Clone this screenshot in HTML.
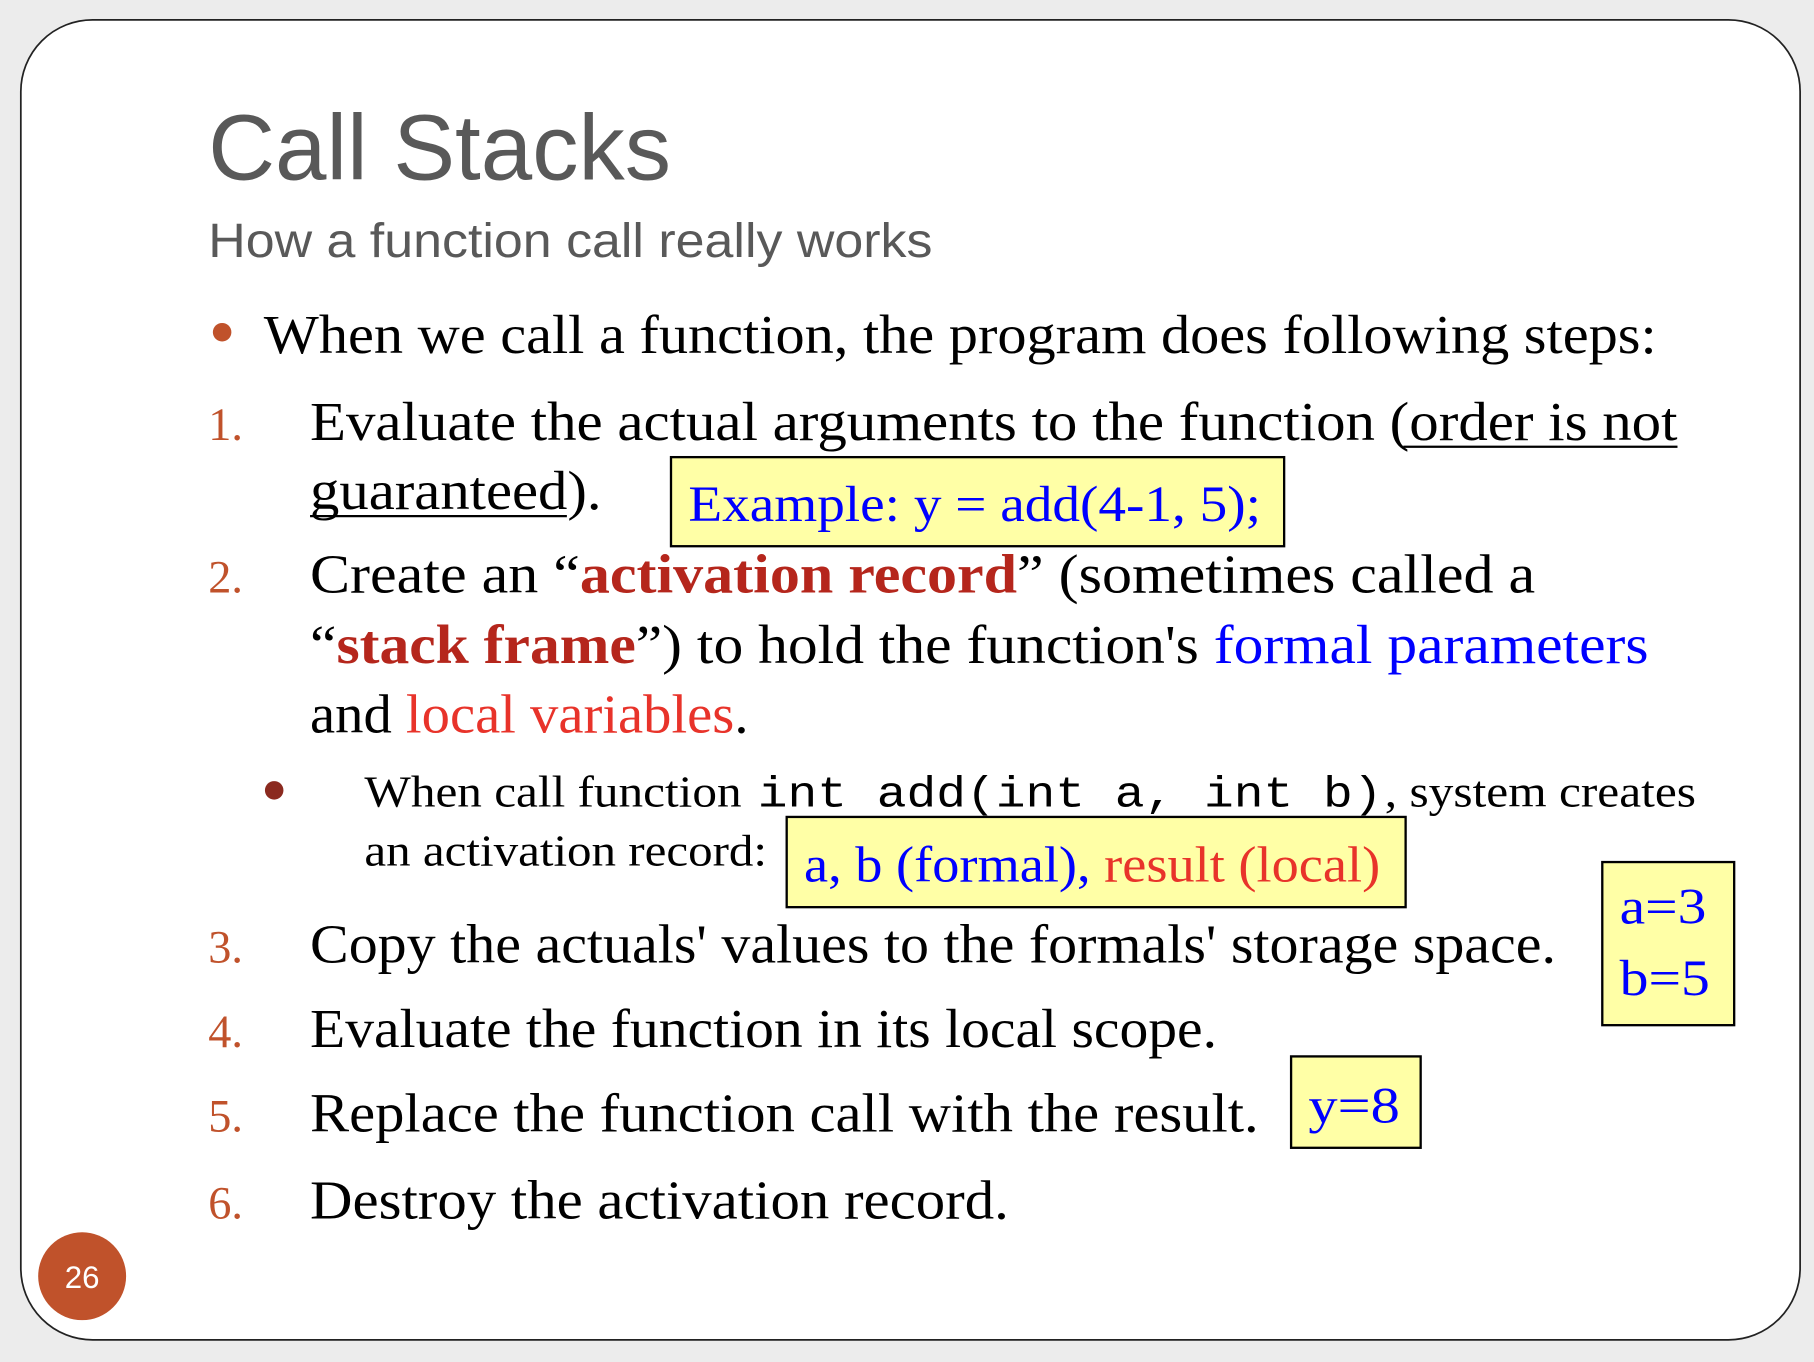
<!DOCTYPE html>
<html><head><meta charset="utf-8"><style>
html,body{margin:0;padding:0;background:#ececec;}
svg{display:block}
</style></head><body>
<svg width="1814" height="1362" viewBox="0 0 1568 1177" xmlns="http://www.w3.org/2000/svg">
<rect x="0" y="0" width="1568" height="1177" fill="#ececec"/>
<rect x="18" y="17" width="1538" height="1141" rx="62" ry="62" fill="#fff" stroke="#222" stroke-width="1.5"/>
<g font-family="Liberation Sans, sans-serif" fill="#595959">
<text x="180" y="155" font-size="80" textLength="400" lengthAdjust="spacingAndGlyphs">Call Stacks</text>
<text x="180" y="222" font-size="42" textLength="626" lengthAdjust="spacingAndGlyphs">How a function call really works</text>
</g>
<circle cx="192" cy="287" r="8" fill="#c0522b"/>
<circle cx="237" cy="683" r="8" fill="#8b2a1f"/>
<g font-family="Liberation Serif, serif" font-size="40" fill="#c0522b">
<text x="180" y="380">1.</text>
<text x="180" y="512">2.</text>
<text x="180" y="832">3.</text>
<text x="180" y="905">4.</text>
<text x="180" y="978">5.</text>
<text x="180" y="1053">6.</text>
</g>
<g font-family="Liberation Serif, serif" font-size="48" fill="#000">
<text x="228" y="305" textLength="1204" lengthAdjust="spacingAndGlyphs">When we call a function, the program does following steps:</text>
<text x="268" y="380" textLength="1182" lengthAdjust="spacingAndGlyphs">Evaluate the actual arguments to the function (order is not</text>
<text x="268" y="440" textLength="252" lengthAdjust="spacingAndGlyphs">guaranteed).</text>
<text x="268" y="512" textLength="1059" lengthAdjust="spacingAndGlyphs">Create an “<tspan font-weight="bold" fill="#b5261c">activation record</tspan>” (sometimes called a</text>
<text x="268" y="573" textLength="1157" lengthAdjust="spacingAndGlyphs">“<tspan font-weight="bold" fill="#b5261c">stack frame</tspan>”) to hold the function's <tspan fill="#0000ff">formal parameters</tspan></text>
<text x="268" y="633" textLength="379" lengthAdjust="spacingAndGlyphs">and <tspan fill="#e8332a">local variables</tspan>.</text>
<text x="268" y="832" textLength="1077" lengthAdjust="spacingAndGlyphs">Copy the actuals' values to the formals' storage space.</text>
<text x="268" y="905" textLength="784" lengthAdjust="spacingAndGlyphs">Evaluate the function in its local scope.</text>
<text x="268" y="978" textLength="820" lengthAdjust="spacingAndGlyphs">Replace the function call with the result.</text>
<text x="268" y="1053" textLength="604" lengthAdjust="spacingAndGlyphs">Destroy the activation record.</text>
</g>
<line x1="1213" y1="386" x2="1450" y2="386" stroke="#000" stroke-width="2"/>
<line x1="268" y1="446" x2="490" y2="446" stroke="#000" stroke-width="2"/>
<g font-size="38" fill="#000">
<text x="315" y="697" font-family="Liberation Serif, serif" textLength="326" lengthAdjust="spacingAndGlyphs">When call function</text>
<text x="655" y="697" font-family="Liberation Mono, monospace" textLength="540" lengthAdjust="spacingAndGlyphs">int add(int a, int b)</text>
<text x="1197" y="697" font-family="Liberation Serif, serif" textLength="269" lengthAdjust="spacingAndGlyphs">, system creates</text>
<text x="315" y="748" font-family="Liberation Serif, serif" textLength="348" lengthAdjust="spacingAndGlyphs">an activation record:</text>
</g>
<g fill="#ffffa6" stroke="#000" stroke-width="2">
<rect x="580" y="395" width="530" height="77"/>
<rect x="680" y="706" width="535" height="78"/>
<rect x="1385" y="745" width="114" height="141"/>
<rect x="1116" y="913" width="112" height="79"/>
</g>
<g font-family="Liberation Serif, serif" font-size="44" fill="#0000ff">
<text x="595" y="450" textLength="495" lengthAdjust="spacingAndGlyphs">Example: y = add(4-1, 5);</text>
<text x="695" y="762" textLength="498" lengthAdjust="spacingAndGlyphs">a, b (formal), <tspan fill="#e8332a">result (local)</tspan></text>
<text x="1400" y="798" textLength="75" lengthAdjust="spacingAndGlyphs">a=3</text>
<text x="1400" y="860" textLength="78" lengthAdjust="spacingAndGlyphs">b=5</text>
<text x="1131" y="970" textLength="79" lengthAdjust="spacingAndGlyphs">y=8</text>
</g>
<circle cx="71" cy="1103" r="38" fill="#c0522b"/>
<text x="71" y="1113" text-anchor="middle" font-family="Liberation Sans, sans-serif" font-size="27" fill="#fff">26</text>
</svg>
</body></html>
